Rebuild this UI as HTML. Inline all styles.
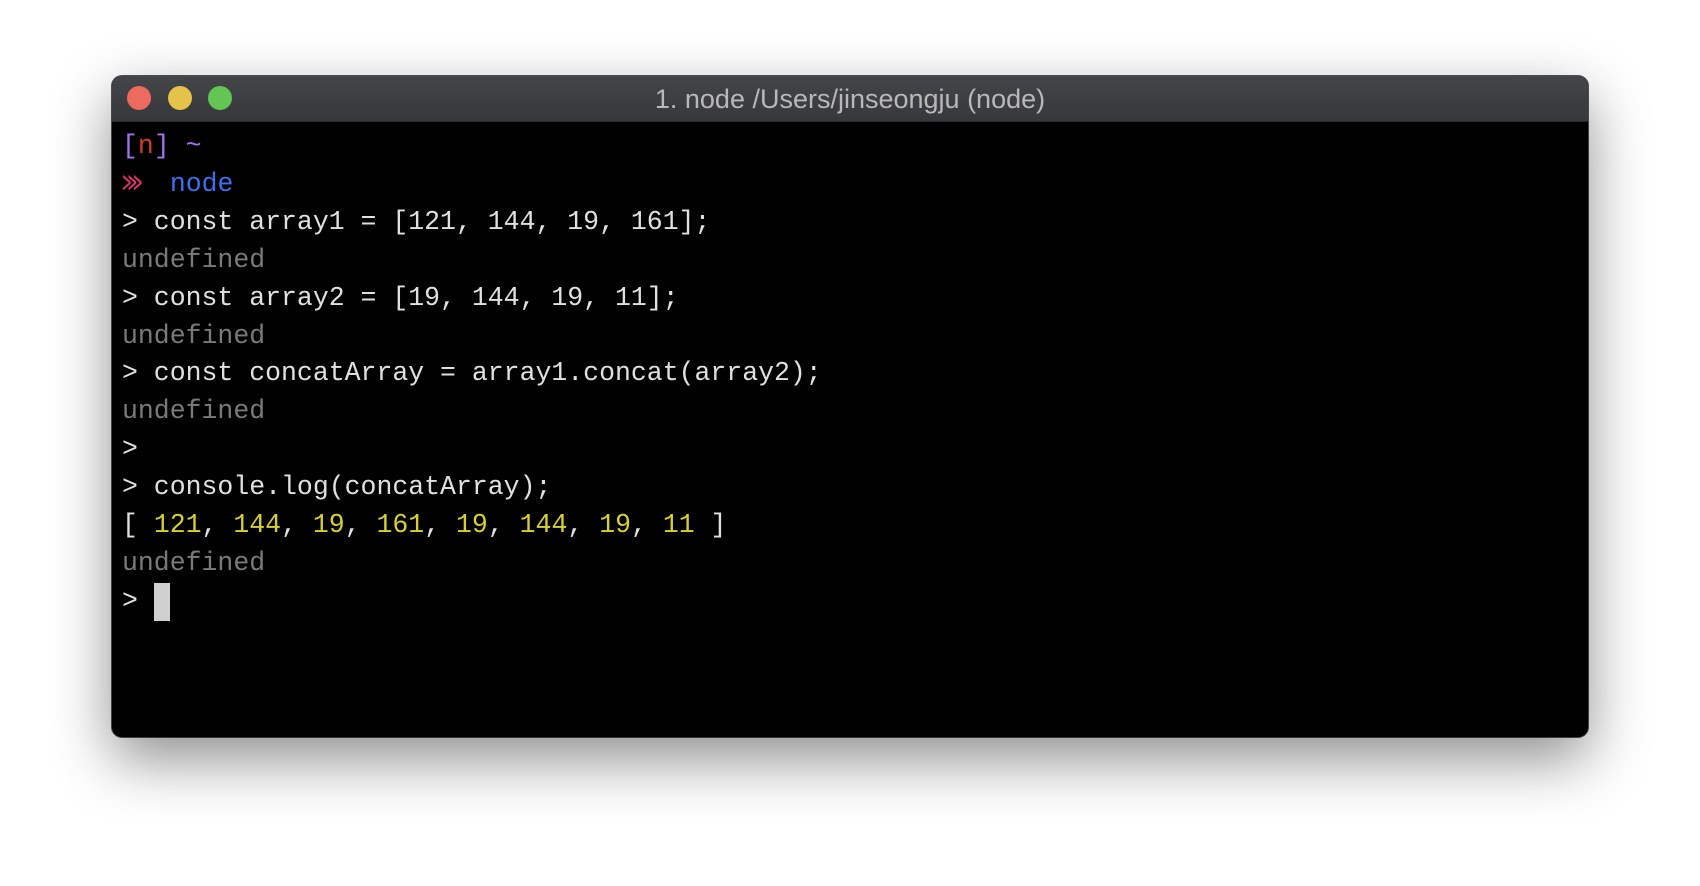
<!DOCTYPE html>
<html><head><style>
html,body{margin:0;padding:0;width:1700px;height:886px;background:#fff;overflow:hidden}
.win{position:absolute;left:112px;top:76px;width:1476px;height:661px;border-radius:10px;background:#000;
box-shadow:0 22px 60px rgba(0,0,0,.45),0 0 0 1px #555;overflow:hidden}
.tb{position:absolute;left:0;top:0;right:0;height:45px;background:linear-gradient(#434548,#36383b);border-bottom:1px solid #2a2a2a}
.dot{position:absolute;top:10px;width:24px;height:24px;border-radius:50%}
.title{position:absolute;left:0;right:0;top:0;height:45px;line-height:47px;text-align:center;color:#b8b8b8;
font-family:"Liberation Sans",sans-serif;font-size:27px}
.term{position:absolute;left:10px;top:52px;font-family:"Liberation Mono",monospace;font-size:26.5px;line-height:37.9px;color:#e0e0e0;white-space:pre}
.g{color:#7a7a7a}.y{color:#d6d12e}.p{color:#a072f0}.r{color:#d23a2a}.b{color:#3d6ff0}.pk{color:#e8326e}
.arr{display:inline-block;width:16px;overflow:visible;transform:scaleX(0.55);transform-origin:left}
.cur{display:inline-block;width:16px;height:38px;background:#d0d0d0;vertical-align:top}
</style></head><body>
<div class="win">
<div class="tb">
<div class="dot" style="left:15px;background:#ed6a5e"></div>
<div class="dot" style="left:56px;background:#e5c34a"></div>
<div class="dot" style="left:96px;background:#62c554"></div>
<div class="title">1. node /Users/jinseongju (node)</div>
</div>
<div class="term"><span class="p">[</span><span class="r">n</span><span class="p">] ~</span>
<span class="pk arr">⋙</span>  <span class="b">node</span>
&gt; const array1 = [121, 144, 19, 161];
<span class="g">undefined</span>
&gt; const array2 = [19, 144, 19, 11];
<span class="g">undefined</span>
&gt; const concatArray = array1.concat(array2);
<span class="g">undefined</span>
&gt;
&gt; console.log(concatArray);
[ <span class="y">121</span>, <span class="y">144</span>, <span class="y">19</span>, <span class="y">161</span>, <span class="y">19</span>, <span class="y">144</span>, <span class="y">19</span>, <span class="y">11</span> ]
<span class="g">undefined</span>
&gt; <span class="cur"></span></div>
</div>
</body></html>
